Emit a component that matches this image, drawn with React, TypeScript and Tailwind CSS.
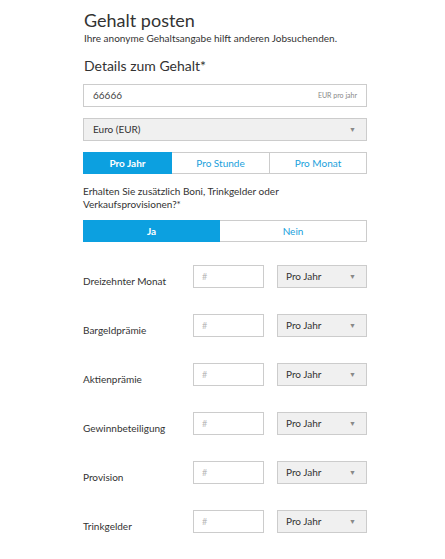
const extras = [
  "Dreizehnter Monat",
  "Bargeldprämie",
  "Aktienprämie",
  "Gewinnbeteiligung",
  "Provision",
  "Trinkgelder",
];

const Caret = () => <span className="text-[7px] text-[#888]">▼</span>;

const App = () => {
  return (
    <div className="w-[445px] h-[559px] bg-white font-['Lato','Open_Sans',sans-serif] text-[#333] overflow-hidden">
      <div className="ml-[83px] w-[284px] pt-[9px]">
        {/* --- header --- */}
        <h1 className="text-[18px] leading-[22px] ml-[1px]">Gehalt posten</h1>
        <p className="text-[10px] leading-[13px] ml-[1px] mt-[1px]">
          Ihre anonyme Gehaltsangabe hilft anderen Jobsuchenden.
        </p>
        <h2 className="text-[14px] leading-[18px] ml-[1px] mt-[12px]">
          Details zum Gehalt*
        </h2>

        {/* --- salary --- */}
        <div className="mt-[9px] h-[23px] border border-[#ccc] flex items-center justify-between px-[9px]">
          <span className="text-[10px] text-[#444]">66666</span>
          <span className="text-[7px] text-[#888]">EUR pro jahr</span>
        </div>
        <div className="mt-[11px] h-[23px] border border-[#ccc] bg-[#f0f0f0] flex items-center justify-between pl-[9px] pr-[10px]">
          <span className="text-[10px]">Euro (EUR)</span>
          <Caret />
        </div>

        {/* --- period tabs --- */}
        <div className="mt-[11px] h-[22px] grid grid-cols-[88px_98px_1fr] border border-[#ccc] text-[10px]">
          <div className="bg-[#0ca0e0] text-white font-bold flex items-center justify-center -m-[1px] mr-0">
            Pro Jahr
          </div>
          <div className="text-[#1a9fdc] flex items-center justify-center border-r border-[#ccc]">
            Pro Stunde
          </div>
          <div className="text-[#1a9fdc] flex items-center justify-center">
            Pro Monat
          </div>
        </div>

        <p className="mt-[11px] text-[10px] leading-[13px]">
          Erhalten Sie zusätzlich Boni, Trinkgelder oder
          <br />
          Verkaufsprovisionen?*
        </p>

        <div className="mt-[9px] h-[22px] grid grid-cols-[136px_1fr] border border-[#ccc] text-[10px]">
          <div className="bg-[#0ca0e0] text-white font-bold flex items-center justify-center -m-[1px] mr-0">
            Ja
          </div>
          <div className="text-[#1a9fdc] flex items-center justify-center">
            Nein
          </div>
        </div>

        {/* --- extras --- */}
        <div className="mt-[23px] flex flex-col gap-[26px]">
          {extras.map((label) => (
            <div key={label} className="flex items-start h-[23px]">
              <span className="w-[110px] text-[10px] pt-[9px]">{label}</span>
              <div className="w-[71px] h-[23px] border border-[#ccc] flex items-center pl-[8px] text-[9px] text-[#bbb]">
                #
              </div>
              <div className="ml-[13px] flex-1 h-[23px] border border-[#ccc] bg-[#f0f0f0] flex items-center justify-between pl-[8px] pr-[10px]">
                <span className="text-[10px]">Pro Jahr</span>
                <Caret />
              </div>
            </div>
          ))}
        </div>
      </div>
    </div>
  );
};

export default App;
